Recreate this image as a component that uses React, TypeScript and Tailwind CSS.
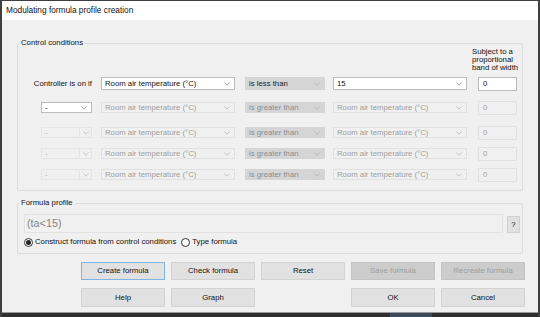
import React from "react";

const Chevron = ({ color = "#9a9a9a" }: { color?: string }) => (
  <svg width="6" height="4" viewBox="0 0 6 4" className="shrink-0">
    <polyline points="0.5,0.5 3,3.2 5.5,0.5" fill="none" stroke={color} strokeWidth="0.8" />
  </svg>
);

type SelProps = {
  text: string;
  w: string;
  variant: "enabled" | "disabled" | "gray" | "grayDisabled";
  h?: string;
  ml?: string;
};

const Sel = ({ text, w, variant, h = "h-[13px]", ml = "" }: SelProps) => {
  const styles: Record<string, string> = {
    enabled: "bg-white border border-[#bcbcbc] text-[#111]",
    disabled: "bg-[#f0f0f0] border border-[#e1e1e1] text-[#9d9d9d]",
    gray: "bg-[#d5d5d5] border border-[#d5d5d5] text-[#222]",
    grayDisabled: "bg-[#d5d5d5] border border-[#d5d5d5] text-[#8e8e8e]",
  };
  return (
    <div className={`${w} ${h} ${ml} ${styles[variant]} flex items-center justify-between pl-[3px] pr-[4px] shrink-0`}>
      <span className="whitespace-nowrap leading-none">{text}</span>
      <Chevron color={variant === "enabled" ? "#8a8a8a" : "#b4b4b4"} />
    </div>
  );
};

const SmallSel = ({ enabled }: { enabled: boolean }) =>
  enabled ? (
    <div className="w-[51px] h-[11px] bg-white border border-[#bcbcbc] flex items-center justify-between pl-[3px] pr-[4px]">
      <span className="leading-none">-</span>
      <Chevron color="#8a8a8a" />
    </div>
  ) : (
    <div className="w-[51px] h-[11px] bg-[#f0f0f0] border border-[#e4e4e4] flex items-center text-[#a8a8a8]">
      <span className="flex-1 pl-[3px] leading-none">-</span>
      <div className="w-[12px] h-full border-l border-[#e4e4e4] flex items-center justify-center">
        <Chevron color="#c0c0c0" />
      </div>
    </div>
  );

const Input = ({ enabled }: { enabled: boolean }) => (
  <div
    className={`w-[39px] h-[14px] ml-[11px] shrink-0 flex items-center pl-[4px] ${
      enabled ? "bg-white border border-[#bcbcbc] text-[#111]" : "bg-[#f0f0f0] border border-[#e1e1e1] text-[#a0a0a0]"
    }`}
  >
    <span className="leading-none">0</span>
  </div>
);

const Btn = ({
  label,
  disabled,
  focused,
}: {
  label: string;
  disabled?: boolean;
  focused?: boolean;
}) => (
  <div
    className={`w-[84px] h-full flex items-center justify-center shrink-0 border ${
      disabled
        ? "bg-[#cccccc] border-[#c4c4c4] text-[#9e9e9e]"
        : focused
        ? "bg-[#e1e1e1] border-[#7fb4e6] text-[#111]"
        : "bg-[#e1e1e1] border-[#d2d2d2] text-[#111]"
    }`}
  >
    {label}
  </div>
);

const Radio = ({ checked }: { checked: boolean }) => (
  <div className="w-[9px] h-[9px] rounded-full border border-[#333] bg-white flex items-center justify-center shrink-0">
    {checked && <div className="w-[5px] h-[5px] rounded-full bg-[#222]" />}
  </div>
);

export default function App() {
  const disabledRows = [
    { mt: "mt-[10px]", first: true },
    { mt: "mt-[11px]", first: false },
    { mt: "mt-[7px]", first: false },
    { mt: "mt-[7px]", first: false },
  ];
  return (
    <div className="w-[540px] h-[317px] bg-[#f0f0f0] flex flex-col overflow-hidden border-l-2 border-r-2 border-t border-[#3f3f3f] font-['Liberation_Sans',Arial,sans-serif] text-[7.75px] text-[#111]">
      {/* Title bar */}
      <div className="h-[19px] bg-white flex items-center pl-[4px] shrink-0">
        <span className="text-[8.3px] text-[#111]">Modulating formula profile creation</span>
      </div>

      {/* Body */}
      <div className="flex-1 flex flex-col px-[15px]">
        {/* Control conditions */}
        <fieldset className="mt-[18px] h-[153px] border border-[#dcdcdc] rounded-[2px]">
          <legend className="ml-[1px] px-[2px] leading-[10px]">Control conditions</legend>
          <div className="flex">
            <div className="ml-[454px] w-[50px] leading-[8.2px] whitespace-nowrap">
              Subject to a
              <br />
              proportional
              <br />
              band of width
            </div>
          </div>
          {/* Row 1 */}
          <div className="flex items-center mt-[4px] h-[14px]">
            <div className="w-[74px] flex justify-end shrink-0">
              <span className="whitespace-nowrap">Controller is on if</span>
            </div>
            <Sel text="Room air temperature (°C)" w="w-[134px]" variant="enabled" ml="ml-[9px]" />
            <Sel text="is less than" w="w-[80px]" variant="gray" ml="ml-[10px]" />
            <Sel text="15" w="w-[134px]" variant="enabled" ml="ml-[8px]" />
            <Input enabled />
          </div>
          {disabledRows.map((r, i) => (
            <div key={i} className={`flex items-center ${r.mt} h-[14px]`}>
              <div className="w-[74px] flex justify-end shrink-0">
                <SmallSel enabled={r.first} />
              </div>
              <Sel text="Room air temperature (°C)" w="w-[134px]" h="h-[11px]" variant="disabled" ml="ml-[9px]" />
              <Sel text="is greater than" w="w-[80px]" h="h-[11px]" variant="grayDisabled" ml="ml-[10px]" />
              <Sel text="Room air temperature (°C)" w="w-[134px]" h="h-[11px]" variant="disabled" ml="ml-[8px]" />
              <Input enabled={false} />
            </div>
          ))}
        </fieldset>

        {/* Formula profile */}
        <fieldset className="mt-[7px] h-[56px] border border-[#dcdcdc] rounded-[2px]">
          <legend className="ml-[1px] px-[2px] leading-[10px]">Formula profile</legend>
          <div className="flex items-start mt-[6px]">
            <div className="ml-[6px] w-[479px] h-[19px] bg-[#f0f0f0] border border-[#e2e2e2] flex items-center pl-[2px]">
              <span className="text-[10.8px] text-[#858585] leading-none">(ta&lt;15)</span>
            </div>
            <div className="ml-[4px] mt-[2px] w-[13px] h-[17px] bg-[#e1e1e1] border border-[#d2d2d2] flex items-center justify-center">
              ?
            </div>
          </div>
          <div className="flex items-center mt-[4px] ml-[6px] h-[10px]">
            <Radio checked />
            <span className="ml-[2px] whitespace-nowrap">Construct formula from control conditions</span>
            <div className="ml-[5px]">
              <Radio checked={false} />
            </div>
            <span className="ml-[2px] whitespace-nowrap">Type formula</span>
          </div>
        </fieldset>

        {/* Buttons */}
        <div className="flex gap-[6px] ml-[64px] mt-[8px] h-[18px]">
          <Btn label="Create formula" focused />
          <Btn label="Check formula" />
          <Btn label="Reset" />
          <Btn label="Save formula" disabled />
          <Btn label="Recreate formula" disabled />
        </div>
        <div className="flex gap-[6px] ml-[64px] mt-[8px] h-[19px]">
          <Btn label="Help" />
          <Btn label="Graph" />
          <div className="w-[84px] shrink-0" />
          <Btn label="OK" />
          <Btn label="Cancel" />
        </div>
      </div>

      {/* Bottom strip */}
      <div className="h-[5px] shrink-0 border-t border-[#9a9a9a] bg-[#2f2f2f] flex">
        <div className="ml-[388px] w-[42px] h-full bg-[#3d4a5c]" />
      </div>
    </div>
  );
}
